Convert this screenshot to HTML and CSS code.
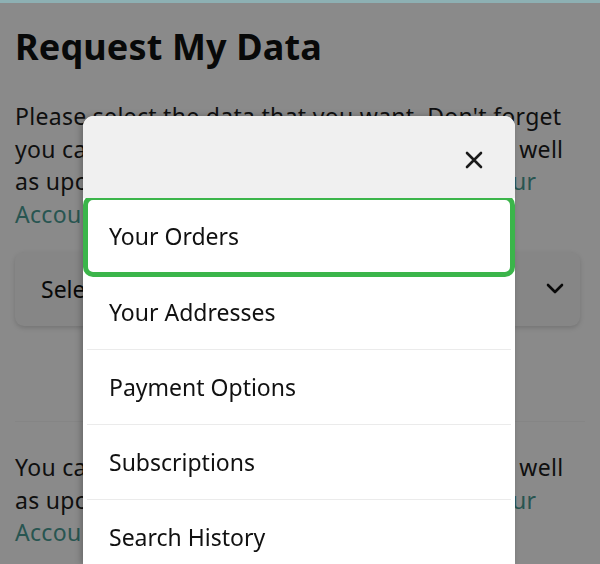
FILE: index.html
```html
<!DOCTYPE html>
<html>
<head>
<meta charset="utf-8">
<link rel="stylesheet" href="styles.css">
</head>
<body>
<div class="topbar"></div>
<main class="page">
  <h1 class="title">Request My Data</h1>
  <p class="text">Please select the data that you want. Don't forget you can also request data for your devices as well as upcoming content and other data from <a class="link" href="#">Your Account</a> pages.</p>
  <div class="select">
    <span class="select-label">Select a category</span>
    <svg class="chev" width="20" height="12" viewBox="0 0 20 12"><path d="M3 2 L10 9 L17 2" fill="none" stroke="#111" stroke-width="2.6" stroke-linecap="round" stroke-linejoin="round"/></svg>
  </div>
  <hr class="rule">
  <p class="text">You can also request data for your devices as well as upcoming content and other data from <a class="link" href="#">Your Account</a> pages.</p>
</main>
<div class="overlay"></div>
<div class="modal">
  <div class="modal-head">
    <svg class="close" width="20" height="20" viewBox="0 0 20 20"><path d="M3 3 L17 17 M17 3 L3 17" fill="none" stroke="#1a1a1a" stroke-width="2.6" stroke-linecap="round"/></svg>
  </div>
  <ul class="list">
    <li class="item item-active">Your Orders</li>
    <li class="item">Your Addresses</li>
    <li class="item">Payment Options</li>
    <li class="item">Subscriptions</li>
    <li class="item">Search History</li>
  </ul>
</div>
</body>
</html>
```

FILE: styles.css
```css
html, body {
  margin: 0;
  padding: 0;
  background: #fff;
  overflow: hidden;
  height: 564px;
}
body {
  font-family: "Noto Sans", "Liberation Sans", sans-serif;
  color: #0f1111;
}
.topbar {
  height: 3px;
  background: #8db0b3;
  position: relative;
  z-index: 3;
}
.page {
  padding: 0 15px;
}
.title {
  margin: 20px 0 0;
  font-size: 36px;
  line-height: 48px;
  font-weight: 700;
  letter-spacing: 0.15px;
}
.text {
  margin: 29px 0 0;
  font-size: 23px;
  line-height: 32.5px;
  letter-spacing: 0.3px;
  width: 568px;
  color: #1c1c1c;
}
.link {
  color: #4a9e96;
  text-decoration: none;
}
.select {
  margin-top: 22px;
  height: 74px;
  width: 565px;
  box-sizing: border-box;
  border-radius: 9px;
  background: #f7f7f7;
  box-shadow: 0 2px 5px rgba(0,0,0,0.16);
  display: flex;
  align-items: center;
  padding: 0 15px 0 26px;
}
.select-label {
  flex: 1;
  font-size: 23px;
}
.rule {
  border: 0;
  border-top: 1px solid #f6f6f6;
  margin: 95px 0 0;
}
.rule + .text {
  margin-top: 29px;
}
.overlay {
  position: fixed;
  left: 0;
  right: 0;
  top: 3px;
  bottom: 0;
  background: rgba(0,0,0,0.46);
  z-index: 1;
}
.modal {
  position: absolute;
  left: 83px;
  top: 116px;
  width: 432px;
  height: 448px;
  background: #fff;
  border-radius: 11px 11px 0 0;
  z-index: 2;
  box-shadow: -2px 0 6px rgba(0,0,0,0.25);
}
.modal-head {
  height: 82px;
  background: #f0f0f0;
  border-radius: 11px 11px 0 0;
  display: flex;
  align-items: center;
  justify-content: flex-end;
  padding-right: 31px;
}
.close {
  display: block;
  margin-top: 6px;
}
.list {
  list-style: none;
  margin: 0;
  padding: 0;
  height: 366px;
  overflow: hidden;
}
.item {
  height: 75px;
  box-sizing: border-box;
  display: flex;
  align-items: center;
  padding-left: 22px;
  font-size: 23px;
  color: #111;
  border-top: 1px solid #ebebeb;
  margin: 0 4px;
}
.item:nth-child(2) {
  border-top-color: transparent;
}
.item-active {
  margin: -3px 0 -3px;
  height: 82px;
  border: 5px solid #3bb54a;
  border-radius: 10px;
  padding-left: 21px;
}
```
